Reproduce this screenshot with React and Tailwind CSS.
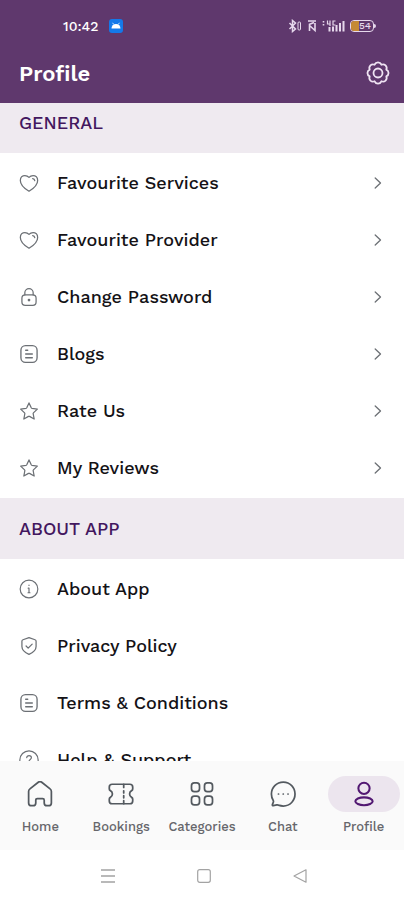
import React from "react";

function Svg({ size = 20, stroke = 1.3, children, className = "" }) {
  return (
    <svg
      width={size}
      height={size}
      viewBox="0 0 24 24"
      fill="none"
      stroke="currentColor"
      strokeWidth={stroke}
      strokeLinecap="round"
      strokeLinejoin="round"
      className={"shrink-0 " + className}
      aria-hidden="true"
    >
      {children}
    </svg>
  );
}

const HeartIcon = () => (
  <Svg stroke={1.5}>
    <path d="M12 21.8C8.600 19.800 1.600 15.200 1.600 8.900 1.600 5.200 4.200 3 7.100 3c2 0 3.600.8 4.900 2.300C13.300 3.800 14.900 3 16.900 3c2.900 0 5.500 2.200 5.500 5.900 0 6.300-7 10.900-10.400 12.900z" />
    <path d="M16.400 6.700c1.500.2 2.300 1.100 2.500 2.500" />
  </Svg>
);

const LockIcon = () => (
  <Svg stroke={1.5}>
    <rect x="3.500" y="9.500" width="17" height="12.500" rx="4" />
    <path d="M7 9.500V7a5 5 0 0 1 10 0v2.500" />
    <circle cx="12" cy="15.700" r="0.900" />
  </Svg>
);

const DocIcon = () => (
  <Svg stroke={1.6}>
    <rect x="2.300" y="2" width="19.400" height="20" rx="5.500" />
    <path d="M8 7.500h2.500M8 12h8M8 16.500h8" />
  </Svg>
);

const StarIcon = () => (
  <Svg stroke={1.5}>
    <path d="M12 2.300l2.700 5.900c.2.400.5.600.9.700l6.400.8-4.700 4.500c-.3.300-.4.700-.3 1.100l1.200 6.300-5.600-3.100c-.4-.2-.8-.2-1.200 0l-5.600 3.100 1.200-6.300c.1-.4 0-.8-.3-1.100L2 9.700l6.400-.8c.4-.1.700-.3.900-.7z" />
  </Svg>
);

const InfoIcon = () => (
  <Svg stroke={1.4}>
    <circle cx="12" cy="12" r="10.600" />
    <path d="M12 11v5.500M12 7.400v.3M11 11h1M10.800 16.500h2.400" />
  </Svg>
);

const ShieldIcon = () => (
  <Svg stroke={1.5}>
    <path d="M12 2l7.200 2.500c.8.300 1.300 1 1.300 1.800v6.200c0 5-4.300 7.600-8.500 9.500-4.200-1.900-8.500-4.500-8.500-9.500V6.300c0-.8.5-1.500 1.300-1.800z" />
    <path d="M8.500 12l2.500 2.500 4.800-4.700" />
  </Svg>
);

const HelpIcon = () => (
  <Svg stroke={1.4}>
    <circle cx="12" cy="12" r="11" />
    <path d="M9.200 9.300c.2-1.700 1.300-2.600 2.900-2.600 1.600 0 2.800 1 2.800 2.500 0 2-2.900 2.300-2.900 4.500M12 17v.2" />
  </Svg>
);

const Chevron = () => (
  <svg width="8" height="12" viewBox="0 0 8 12" fill="none" stroke="currentColor" strokeWidth="1.300" strokeLinecap="round" strokeLinejoin="round" className="shrink-0" aria-hidden="true">
    <path d="M1.200 1l5.300 5-5.300 5" />
  </svg>
);

const HomeIcon = () => (
  <Svg size={26} stroke={1.6}>
    <path d="M1.500 9.800c0-1 .4-1.900 1.200-2.500l7.400-5.900c1.100-.9 2.700-.9 3.800 0l7.400 5.900c.8.600 1.200 1.500 1.200 2.500v10.400c0 1.600-1.100 2.600-2.600 2.600h-1.400c-1.500 0-2.600-1-2.600-2.600v-2.400c0-.9-.6-1.500-1.500-1.500h-4.800c-.9 0-1.500.6-1.500 1.500v2.400c0 1.600-1.100 2.600-2.600 2.600H4.100c-1.500 0-2.600-1-2.600-2.600z" />
  </Svg>
);

const TicketIcon = () => (
  <Svg size={26} stroke={1.6}>
    <path d="M3.800 3h16.400c1.600 0 2.600 1 2.600 2.600v1.700c0 .7-.4 1.300-1 1.600-2.500 1.300-2.500 4.900 0 6.200.6.300 1 .9 1 1.600v1.700c0 1.600-1 2.600-2.600 2.600H3.800c-1.600 0-2.600-1-2.600-2.600v-1.700c0-.7.4-1.300 1-1.600 2.500-1.300 2.500-4.900 0-6.200-.6-.3-1-.9-1-1.600V5.600C1.200 4 2.200 3 3.800 3z" />
    <path d="M14.500 3v3M14.500 9v2M14.500 13.500v2M14.500 18v3" />
  </Svg>
);

const GridIcon = () => (
  <Svg size={26} stroke={1.600}>
    <rect x="2.300" y="1.700" width="7.400" height="8" rx="2.600" />
    <rect x="14.300" y="1.700" width="7.400" height="8" rx="2.600" />
    <rect x="2.300" y="14" width="7.400" height="8" rx="2.600" />
    <rect x="14.300" y="14" width="7.400" height="8" rx="2.600" />
  </Svg>
);

const ChatIcon = () => (
  <Svg size={26} stroke={1.600}>
    <path d="M12.300 1C6 1 1.300 6 1.300 12c0 2.300.6 4.300 1.700 6 .3.500.3 1 .1 1.500l-.9 2.300c-.2.600.2 1.100.8 1l3.300-.7c.5-.1 1 0 1.500.2 1.400.5 2.900.8 4.500.8 6.200 0 10.800-5 10.800-11S18.500 1 12.300 1z" />
    <path d="M7.800 12h.1M12.200 12h.1M16.600 12h.1" />
  </Svg>
);

const PersonIcon = () => (
  <Svg size={26} stroke={1.900}>
    <circle cx="12" cy="6.800" r="5.200" />
    <ellipse cx="12" cy="18.700" rx="8" ry="3.600" />
  </Svg>
);

const GearIcon = () => (
  <Svg size={24} stroke={1.800}>
    <path d="M20.300 8.600a3.700 3.700 0 0 1 0 6.800 3.700 3.700 0 0 1-4.900 4.900 3.700 3.700 0 0 1-6.800 0 3.700 3.700 0 0 1-4.900-4.900 3.700 3.700 0 0 1 0-6.800 3.700 3.700 0 0 1 4.900-4.900 3.700 3.700 0 0 1 6.800 0 3.700 3.700 0 0 1 4.900 4.900z" />
    <circle cx="12" cy="12" r="4.500" />
  </Svg>
);

const general = [
  ["Favourite Services", HeartIcon],
  ["Favourite Provider", HeartIcon],
  ["Change Password", LockIcon],
  ["Blogs", DocIcon],
  ["Rate Us", StarIcon],
  ["My Reviews", StarIcon],
];

const about = [
  ["About App", InfoIcon],
  ["Privacy Policy", ShieldIcon],
  ["Terms & Conditions", DocIcon],
  ["Help & Support", HelpIcon],
];

const tabs = [
  ["Home", HomeIcon],
  ["Bookings", TicketIcon],
  ["Categories", GridIcon],
  ["Chat", ChatIcon],
  ["Profile", PersonIcon],
];

function Menu({ items, chevron }) {
  return (
    <ul className="pt-px pb-0.5">
      {items.map(([label, Icon]) => (
        <li key={label}>
          <button type="button" className="flex h-[57px] w-full items-center pr-[22px] pl-[19px] text-left text-[#6c7075]">
            <Icon />
            <span className="ml-[18px] flex-1 text-lg font-medium text-[#141216]">{label}</span>
            {chevron && <Chevron />}
          </button>
        </li>
      ))}
    </ul>
  );
}

function StatusBar() {
  return (
    <div className="flex h-[52px] items-center pr-7 pl-[63px]">
      <span className="text-sm font-medium">10:42</span>
      <svg width="14" height="14" viewBox="0 0 14 14" className="ml-[11px]" aria-hidden="true">
        <rect width="14" height="14" rx="3" fill="#1479ea" />
        <path d="M2.500 9.500a4.500 4.500 0 0 1 9 0z" fill="#fff" />
        <path d="M3.600 3.800l1.200 1.800M10.400 3.800L9.200 5.600" stroke="#fff" strokeWidth="0.800" />
      </svg>
      <div className="ml-auto flex items-center text-[#e6d8ec]">
        <svg width="58" height="14" viewBox="0 0 58 14" fill="none" stroke="currentColor" aria-hidden="true">
          <path d="M1.500 4l6 6L4.500 12.500v-11L7.500 4l-6 6" strokeWidth="1.500" />
          <rect x="10" y="3" width="2.500" height="8" rx="1" strokeWidth="1" />
          <path d="M20 2h8M21 5.500l5-2M21.500 12V6.500l5.500 5V4" strokeWidth="1.600" />
          <path d="M35.500 2v1.500M35.500 5v1.500" strokeWidth="1.600" />
          <path d="M39.500 1.500v3.500h3M42 1.500V7M47.500 2H45v4h2.500" strokeWidth="1.200" />
          <path d="M41.500 12.500V8M45 12.500V7.500M48.500 12.500V6M52 12.500V4M55.500 12.500V2" strokeWidth="2" />
        </svg>
        <div className="ml-1 flex items-center">
          <div className="flex h-3 w-6 items-center overflow-hidden rounded border border-current">
            <span className="h-full w-2 bg-[#c58a35]" />
            <span className="text-[10px] leading-none font-medium">54</span>
          </div>
          <span className="h-1 w-0.5 rounded-r bg-current" />
        </div>
      </div>
    </div>
  );
}

export default function App() {
  return (
    <div className="flex h-screen flex-col bg-white font-['Work_Sans',Inter,sans-serif]">
      <header className="h-[103px] shrink-0 bg-[#5f386d] text-white">
        <StatusBar />
        <div className="flex h-[42px] items-center justify-between pr-[14px] pl-[19px]">
          <h1 className="text-[22px] font-semibold">Profile</h1>
          <button type="button" aria-label="Settings" className="text-[#efe3f3]">
            <GearIcon />
          </button>
        </div>
      </header>

      <main className="min-h-0 flex-1 overflow-y-auto [scrollbar-width:none]">
        <section>
          <h2 className="bg-[#efeaf0] px-[19px] pt-2 pb-[18px] text-lg leading-6 font-medium text-[#43175f]">GENERAL</h2>
          <Menu items={general} chevron />
        </section>
        <section>
          <h2 className="bg-[#efeaf0] px-[19px] pt-[19px] pb-[18px] text-lg leading-6 font-medium text-[#43175f]">ABOUT APP</h2>
          <Menu items={about} />
        </section>
      </main>

      <nav className="grid h-[89px] shrink-0 grid-cols-5 bg-[#fafafa] pt-[15px]">
        {tabs.map(([label, Icon]) => (
          <a
            key={label}
            href={"#" + label.toLowerCase()}
            className="flex flex-col items-center gap-1.5 text-[#53595f]"
          >
            <span
              className={
                label === "Profile"
                  ? "flex h-9 w-[72px] items-center justify-center rounded-full bg-[#ece5ee] text-[#521872]"
                  : "flex h-9 w-[72px] items-center justify-center"
              }
            >
              <Icon />
            </span>
            <span className="text-[13px] leading-[18px] font-medium text-[#66666b]">{label}</span>
          </a>
        ))}
      </nav>

      <div className="flex h-[50px] shrink-0 items-center justify-center gap-[82px] pt-0.5 pl-1 text-[#a3a3a3]">
        <button type="button" aria-label="Recent apps">
          <svg width="14" height="14" viewBox="0 0 14 14" stroke="currentColor" strokeWidth="1.300" aria-hidden="true">
            <path d="M0 1h14M0 7h14M0 13h14" />
          </svg>
        </button>
        <button type="button" aria-label="Home screen">
          <svg width="14" height="14" viewBox="0 0 14 14" fill="none" stroke="currentColor" strokeWidth="1.200" aria-hidden="true">
            <rect x="0.700" y="0.700" width="12.600" height="12.600" rx="2" />
          </svg>
        </button>
        <button type="button" aria-label="Back">
          <svg width="14" height="14" viewBox="0 0 14 14" fill="none" stroke="currentColor" strokeWidth="1.200" strokeLinejoin="round" aria-hidden="true">
            <path d="M13 0.800v12.400L1 7z" />
          </svg>
        </button>
      </div>
    </div>
  );
}
